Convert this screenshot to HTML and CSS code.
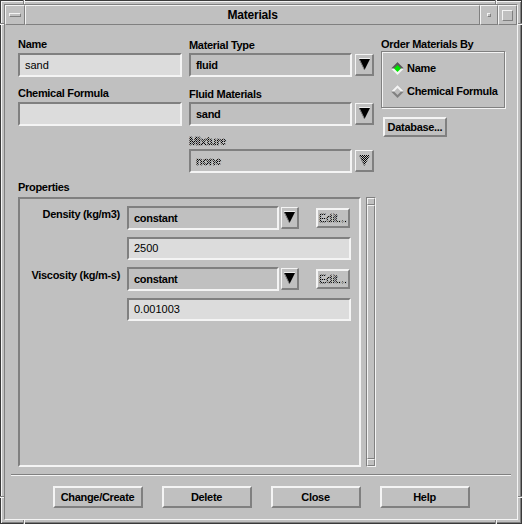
FILE: index.html
```html
<!DOCTYPE html>
<html lang="en">
<head>
    <meta charset="UTF-8">
    <title>Materials</title>
    <link rel="stylesheet" href="styles.css">
</head>
<body>
    <svg class="defs" width="0" height="0">
        <defs>
            <pattern id="stip" width="2" height="2" patternUnits="userSpaceOnUse">
                <rect width="1" height="1" fill="#000"/>
                <rect x="1" y="1" width="1" height="1" fill="#000"/>
            </pattern>
        </defs>
    </svg>

    <div class="window">
        <span class="corner tl"></span>
        <span class="corner tr"></span>
        <span class="corner bl"></span>
        <span class="corner br"></span>

        <div class="frame">
            <div class="titlebar">
                <div class="tb-btn menu-btn"><span class="bar"></span></div>
                <div class="title">Materials</div>
                <div class="tb-btn min-btn"><span class="dot"></span></div>
                <div class="tb-btn max-btn"><span class="box"></span></div>
            </div>

            <div class="client">
                <div class="top">
                    <!-- name / formula -->
                    <div class="col">
                        <div class="label">Name</div>
                        <div class="field">sand</div>
                        <div class="label gap">Chemical Formula</div>
                        <div class="field"></div>
                    </div>

                    <!-- material type / fluid / mixture -->
                    <div class="col col-type">
                        <div class="label">Material Type</div>
                        <div class="combo-row">
                            <div class="combo">fluid</div>
                            <div class="arrow-btn">
                                <svg width="11" height="13" viewBox="0 0 11 13"><polygon points="0,1 11,1 5.5,12" fill="#000"/><line x1="0.5" y1="1.5" x2="5.5" y2="12" stroke="#808080"/><line x1="0" y1="0.5" x2="11" y2="0.5" stroke="#eee"/></svg>
                            </div>
                        </div>
                        <div class="label gap">Fluid Materials</div>
                        <div class="combo-row">
                            <div class="combo">sand</div>
                            <div class="arrow-btn">
                                <svg width="11" height="13" viewBox="0 0 11 13"><polygon points="0,1 11,1 5.5,12" fill="#000"/><line x1="0.5" y1="1.5" x2="5.5" y2="12" stroke="#808080"/><line x1="0" y1="0.5" x2="11" y2="0.5" stroke="#eee"/></svg>
                            </div>
                        </div>
                        <div class="label gap-sm"><span class="stipple">Mixture</span></div>
                        <div class="combo-row">
                            <div class="combo"><span class="stipple">none</span></div>
                            <div class="arrow-btn">
                                <svg width="11" height="13" viewBox="0 0 11 13"><polygon points="0,1 11,1 5.5,12" fill="url(#stip)"/><line x1="0.5" y1="1.5" x2="5.5" y2="12" stroke="#808080"/></svg>
                            </div>
                        </div>
                    </div>

                    <!-- ordering -->
                    <div class="col">
                        <div class="label">Order Materials By</div>
                        <div class="radio-box">
                            <div class="radio">
                                <svg width="13" height="13" viewBox="0 0 13 13">
                                    <polygon points="6.5,0 13,6.5 6.5,13 0,6.5" fill="#f4f4f4"/>
                                    <polygon points="0,6.5 6.5,0 13,6.5" fill="#5a5a5a"/>
                                    <polygon points="6.5,3 10,6.5 6.5,10 3,6.5" fill="#00e600"/>
                                </svg>
                                Name
                            </div>
                            <div class="radio">
                                <svg width="13" height="13" viewBox="0 0 13 13">
                                    <polygon points="6.5,0 13,6.5 6.5,13 0,6.5" fill="#808080"/>
                                    <polygon points="0,6.5 6.5,0 13,6.5" fill="#f4f4f4"/>
                                    <polygon points="6.5,3 10,6.5 6.5,10 3,6.5" fill="#c0c0c0"/>
                                </svg>
                                Chemical Formula
                            </div>
                        </div>
                        <div class="btn db-btn">Database...</div>
                    </div>
                </div>

                <div class="label props-label">Properties</div>
                <div class="props">
                    <div class="props-box">
                        <div class="props-grid">
                            <div class="prop-name">Density (kg/m3)</div>
                            <div class="combo-row">
                                <div class="combo small">constant</div>
                                <div class="arrow-btn narrow">
                                    <svg width="11" height="13" viewBox="0 0 11 13"><polygon points="0,1 11,1 5.5,12" fill="#000"/><line x1="0.5" y1="1.5" x2="5.5" y2="12" stroke="#808080"/><line x1="0" y1="0.5" x2="11" y2="0.5" stroke="#eee"/></svg>
                                </div>
                                <div class="btn edit-btn"><span class="stipple">Edit...</span></div>
                            </div>
                            <div></div>
                            <div class="field short">2500</div>

                            <div class="prop-name">Viscosity (kg/m-s)</div>
                            <div class="combo-row">
                                <div class="combo small">constant</div>
                                <div class="arrow-btn narrow">
                                    <svg width="11" height="13" viewBox="0 0 11 13"><polygon points="0,1 11,1 5.5,12" fill="#000"/><line x1="0.5" y1="1.5" x2="5.5" y2="12" stroke="#808080"/><line x1="0" y1="0.5" x2="11" y2="0.5" stroke="#eee"/></svg>
                                </div>
                                <div class="btn edit-btn"><span class="stipple">Edit...</span></div>
                            </div>
                            <div></div>
                            <div class="field short">0.001003</div>
                        </div>
                    </div>
                    <div class="scrollbar">
                        <div class="sb-end"></div>
                        <div class="sb-thumb"></div>
                        <div class="sb-end"></div>
                    </div>
                </div>

                <div class="separator"></div>

                <div class="actions">
                    <div class="btn action">Change/Create</div>
                    <div class="btn action">Delete</div>
                    <div class="btn action">Close</div>
                    <div class="btn action">Help</div>
                </div>
            </div>
        </div>
    </div>
</body>
</html>
```

FILE: styles.css
```css
body {
    margin: 0;
    background-color: #c0c0c0;
    font-family: "Liberation Sans", Arial, Helvetica, sans-serif;
    font-size: 11px;
    color: #000;
}
.defs {
    position: absolute;
}

/* window frame */
.window {
    position: relative;
    width: 522px;
    height: 524px;
    box-sizing: border-box;
    border: 1px solid #3a3a3a;
    padding: 3px;
    background-color: #c0c0c0;
    box-shadow: inset 1px 1px 0 #f4f4f4, inset -1px -1px 0 #808080;
}
.frame {
    height: 100%;
    box-sizing: border-box;
    border: 1px solid;
    border-color: #808080 #f4f4f4 #f4f4f4 #808080;
    display: flex;
    flex-direction: column;
}
.corner::before,
.corner::after {
    content: "";
    position: absolute;
}
.corner::before {
    width: 0;
    height: 4px;
    border-left: 1px solid #808080;
    border-right: 1px solid #f4f4f4;
}
.corner::after {
    width: 4px;
    height: 0;
    border-top: 1px solid #808080;
    border-bottom: 1px solid #f4f4f4;
}
.tl::before { left: 22px; top: -1px; }
.tl::after { top: 22px; left: -1px; }
.tr::before { left: 494px; top: -1px; }
.tr::after { top: 22px; right: -1px; }
.bl::before { left: 22px; bottom: -1px; }
.bl::after { top: 495px; left: -1px; }
.br::before { left: 494px; bottom: -1px; }
.br::after { top: 495px; right: -1px; }

/* title bar */
.titlebar {
    display: flex;
    height: 20px;
}
.tb-btn,
.title {
    box-sizing: border-box;
    border: 1px solid;
    border-color: #f4f4f4 #808080 #808080 #f4f4f4;
    display: flex;
    align-items: center;
    justify-content: center;
}
.menu-btn { width: 20px; }
.min-btn { width: 18px; }
.max-btn { width: 19px; }
.title {
    flex: 1;
    font-size: 12px;
    font-weight: bold;
    letter-spacing: -0.2px;
}
.menu-btn .bar {
    width: 10px;
    height: 2px;
    border: 1px solid;
    border-color: #f4f4f4 #808080 #808080 #f4f4f4;
}
.min-btn .dot {
    width: 2px;
    height: 2px;
    border: 1px solid;
    border-color: #f4f4f4 #808080 #808080 #f4f4f4;
}
.max-btn .box {
    width: 9px;
    height: 9px;
    border: 1px solid;
    border-color: #f4f4f4 #808080 #808080 #f4f4f4;
}

/* client area */
.client {
    flex: 1;
    padding: 11px 11px 0 13px;
}
.label {
    height: 16px;
    line-height: 16px;
    font-weight: bold;
    letter-spacing: -0.3px;
    white-space: nowrap;
}
.label.gap { margin-top: 8px; }
.label.gap-sm { margin-top: 6px; }
.col-type .label {
    box-sizing: border-box;
    line-height: 14px;
    padding-top: 2px;
}

.top {
    display: grid;
    grid-template-columns: 164px 185px 124px;
    column-gap: 7px;
    align-items: start;
}

.field {
    box-sizing: border-box;
    height: 24px;
    margin-top: 1px;
    padding: 0 5px;
    line-height: 20px;
    background-color: #dcdcdc;
    border: 2px solid;
    border-color: #808080 #f4f4f4 #f4f4f4 #808080;
}
.field.short {
    width: 224px;
    height: 23px;
    margin-top: 0;
    line-height: 19px;
}

.combo-row {
    display: flex;
    align-items: center;
    height: 24px;
    margin-top: 1px;
}
.combo {
    box-sizing: border-box;
    width: 163px;
    height: 24px;
    padding: 0 5px;
    line-height: 20px;
    font-weight: bold;
    letter-spacing: -0.3px;
    border: 2px solid;
    border-color: #808080 #f4f4f4 #f4f4f4 #808080;
}
.combo.small { width: 152px; }
.arrow-btn {
    box-sizing: border-box;
    width: 19px;
    height: 22px;
    margin-left: 3px;
    border-style: solid;
    border-width: 1px 2px 2px 1px;
    border-color: #f4f4f4 #808080 #808080 #f4f4f4;
    display: flex;
    align-items: center;
    justify-content: center;
}
.arrow-btn.narrow {
    width: 18px;
    margin-left: 2px;
}
.arrow-btn svg {
    display: block;
}

/* greyed-out text, drawn as a dot pattern */
.stipple {
    color: transparent;
    background: repeating-conic-gradient(#000 0 25%, transparent 0 50%) 0 0 / 2px 2px;
    -webkit-background-clip: text;
    background-clip: text;
    -webkit-text-stroke: 0.3px rgba(0, 0, 0, 0.35);
}

/* ordering box */
.radio-box {
    box-sizing: border-box;
    height: 57px;
    margin-top: -1px;
    padding: 5px 0 0 9px;
    border: 1px solid #808080;
    box-shadow: inset 1px 1px 0 #f4f4f4, 1px 1px 0 #f4f4f4;
}
.radio {
    display: flex;
    align-items: center;
    gap: 3px;
    height: 22px;
    font-weight: bold;
    letter-spacing: -0.3px;
    white-space: nowrap;
}
.radio + .radio { height: 24px; }

.btn {
    box-sizing: border-box;
    display: flex;
    align-items: center;
    justify-content: center;
    font-weight: bold;
    letter-spacing: -0.3px;
    white-space: nowrap;
    border-style: solid;
    border-width: 2px;
    border-color: #f4f4f4 #808080 #808080 #f4f4f4;
}
.db-btn {
    width: 64px;
    height: 20px;
    margin: 9px 0 0 2px;
}

/* properties */
.props-label {
    margin-top: 6px;
}
.props {
    display: flex;
    margin-top: 2px;
    height: 270px;
}
.props-box {
    box-sizing: border-box;
    width: 343px;
    height: 100%;
    padding-top: 7px;
    border: 2px solid;
    border-color: #808080 #f4f4f4 #f4f4f4 #808080;
}
.props-grid {
    display: grid;
    grid-template-columns: 100px auto;
    column-gap: 7px;
    row-gap: 7px;
    align-items: start;
}
.props-grid .combo-row {
    margin-top: 0;
}
.prop-name {
    text-align: right;
    font-weight: bold;
    letter-spacing: -0.3px;
    line-height: 14px;
    padding-top: 1px;
    white-space: nowrap;
}
.edit-btn {
    width: 34px;
    height: 20px;
    margin-left: 17px;
    font-weight: normal;
    letter-spacing: 0;
}

.scrollbar {
    box-sizing: border-box;
    width: 10px;
    height: 100%;
    margin-left: 5px;
    display: flex;
    flex-direction: column;
    border: 1px solid;
    border-color: #808080 #f4f4f4 #f4f4f4 #808080;
    background-color: #a8a8a8;
}
.sb-end {
    height: 7px;
    border: 1px solid;
    border-color: #f4f4f4 #808080 #808080 #f4f4f4;
    box-sizing: border-box;
    background-color: #c0c0c0;
}
.sb-thumb {
    flex: 1;
    box-sizing: border-box;
    border: 1px solid;
    border-color: #f4f4f4 #808080 #808080 #f4f4f4;
    background-color: #c0c0c0;
}

.separator {
    margin: 7px -5px 0 -7px;
    border-top: 1px solid #808080;
    border-bottom: 1px solid #f4f4f4;
}

.actions {
    display: flex;
    justify-content: center;
    gap: 19px;
    margin: 10px 2px 0 0;
}
.action {
    width: 90px;
    height: 22px;
}
```
